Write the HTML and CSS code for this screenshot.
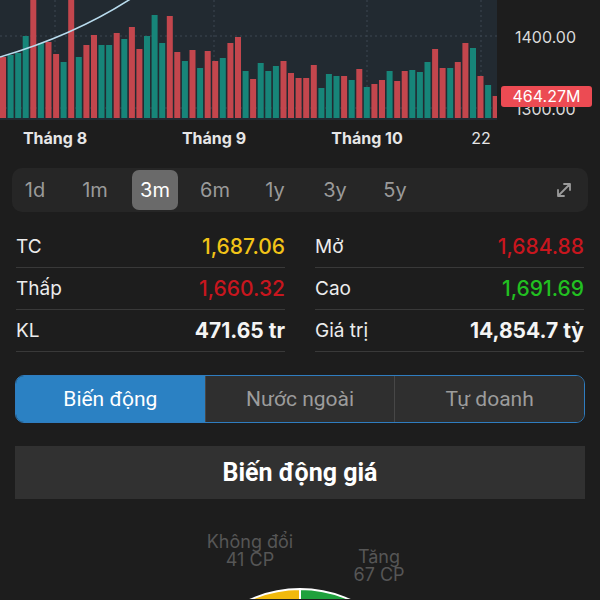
FILE: index.html
```html
<!DOCTYPE html>
<html lang="vi">
<head>
    <meta charset="UTF-8">
    <meta name="viewport" content="width=device-width, initial-scale=1.0">
    <title>VNINDEX</title>
    <link rel="stylesheet" href="styles.css">
</head>
<body>
    <div class="chart">
        <div class="plot">
            <svg width="497" height="120" viewBox="0 0 497 120">
                <g class="grid">
                    <line x1="55" y1="0" x2="55" y2="118"/>
                    <line x1="214" y1="0" x2="214" y2="118"/>
                    <line x1="367" y1="0" x2="367" y2="118"/>
                    <line x1="481" y1="0" x2="481" y2="118"/>
                    <line x1="0" y1="36" x2="497" y2="36"/>
                    <line x1="0" y1="108" x2="497" y2="108"/>
                </g>
                <g class="bars">
                    <rect class="dn" x="0" y="57" width="6" height="61"/>
                    <rect class="up" x="7.6" y="55" width="6" height="63"/>
                    <rect class="up" x="15.2" y="53" width="6" height="65"/>
                    <rect class="up" x="22.7" y="36" width="6" height="82"/>
                    <rect class="dn" x="30.3" y="0" width="6" height="118"/>
                    <rect class="up" x="37.9" y="43" width="6" height="75"/>
                    <rect class="dn" x="45.5" y="42" width="6" height="76"/>
                    <rect class="dn" x="53.1" y="54" width="6" height="64"/>
                    <rect class="up" x="60.6" y="62" width="6" height="56"/>
                    <rect class="dn" x="68.2" y="0" width="6" height="118"/>
                    <rect class="up" x="75.8" y="57" width="6" height="61"/>
                    <rect class="dn" x="83.4" y="45" width="6" height="73"/>
                    <rect class="dn" x="91" y="35" width="6" height="83"/>
                    <rect class="up" x="98.5" y="45" width="6" height="73"/>
                    <rect class="up" x="106.1" y="45" width="6" height="73"/>
                    <rect class="dn" x="113.7" y="33" width="6" height="85"/>
                    <rect class="up" x="121.3" y="39" width="6" height="79"/>
                    <rect class="dn" x="128.9" y="27" width="6" height="91"/>
                    <rect class="dn" x="136.4" y="49" width="6" height="69"/>
                    <rect class="up" x="144" y="36" width="6" height="82"/>
                    <rect class="up" x="151.6" y="15" width="6" height="103"/>
                    <rect class="up" x="159.2" y="43" width="6" height="75"/>
                    <rect class="dn" x="166.8" y="16" width="6" height="102"/>
                    <rect class="dn" x="174.3" y="52" width="6" height="66"/>
                    <rect class="up" x="181.9" y="61" width="6" height="57"/>
                    <rect class="dn" x="189.5" y="50" width="6" height="68"/>
                    <rect class="up" x="197.1" y="68" width="6" height="50"/>
                    <rect class="dn" x="204.7" y="51" width="6" height="67"/>
                    <rect class="dn" x="212.2" y="61" width="6" height="57"/>
                    <rect class="up" x="219.8" y="58" width="6" height="60"/>
                    <rect class="dn" x="227.4" y="43" width="6" height="75"/>
                    <rect class="dn" x="235" y="37" width="6" height="81"/>
                    <rect class="up" x="242.6" y="71" width="6" height="47"/>
                    <rect class="dn" x="250.1" y="79" width="6" height="39"/>
                    <rect class="up" x="257.7" y="63" width="6" height="55"/>
                    <rect class="up" x="265.3" y="71" width="6" height="47"/>
                    <rect class="up" x="272.9" y="66" width="6" height="52"/>
                    <rect class="dn" x="280.5" y="61" width="6" height="57"/>
                    <rect class="dn" x="288" y="73" width="6" height="45"/>
                    <rect class="dn" x="295.6" y="78" width="6" height="40"/>
                    <rect class="dn" x="303.2" y="78" width="6" height="40"/>
                    <rect class="dn" x="310.8" y="65" width="6" height="53"/>
                    <rect class="up" x="318.4" y="88" width="6" height="30"/>
                    <rect class="up" x="325.9" y="74" width="6" height="44"/>
                    <rect class="up" x="333.5" y="76" width="6" height="42"/>
                    <rect class="dn" x="341.1" y="76" width="6" height="42"/>
                    <rect class="up" x="348.7" y="80" width="6" height="38"/>
                    <rect class="dn" x="356.3" y="69" width="6" height="49"/>
                    <rect class="up" x="363.8" y="87" width="6" height="31"/>
                    <rect class="dn" x="371.4" y="84" width="6" height="34"/>
                    <rect class="dn" x="379" y="80" width="6" height="38"/>
                    <rect class="up" x="386.6" y="71" width="6" height="47"/>
                    <rect class="dn" x="394.2" y="81" width="6" height="37"/>
                    <rect class="dn" x="401.7" y="71" width="6" height="47"/>
                    <rect class="up" x="409.3" y="70" width="6" height="48"/>
                    <rect class="up" x="416.9" y="72" width="6" height="46"/>
                    <rect class="up" x="424.5" y="62" width="6" height="56"/>
                    <rect class="dn" x="432.1" y="49" width="6" height="69"/>
                    <rect class="dn" x="439.6" y="68" width="6" height="50"/>
                    <rect class="up" x="447.2" y="68" width="6" height="50"/>
                    <rect class="dn" x="454.8" y="62" width="6" height="56"/>
                    <rect class="dn" x="462.4" y="43" width="6" height="75"/>
                    <rect class="up" x="470" y="48" width="6" height="70"/>
                    <rect class="dn" x="477.5" y="76" width="6" height="42"/>
                    <rect class="up" x="485.1" y="85" width="6" height="33"/>
                    <rect class="dn" x="492.7" y="96" width="6" height="22"/>
                </g>
                <path class="trend" d="M0 57 Q 75 35 132 -2"/>
            </svg>
        </div>
        <div class="axis">
            <span class="price price-top">1400.00</span>
            <span class="price price-low">1300.00</span>
            <span class="vol-tag">464.27M</span>
        </div>
    </div>

    <div class="months">
        <span class="month m8">Tháng 8</span>
        <span class="month m9">Tháng 9</span>
        <span class="month m10">Tháng 10</span>
        <span class="month day">22</span>
    </div>

    <div class="periods">
        <span class="period">1d</span>
        <span class="period">1m</span>
        <span class="period active">3m</span>
        <span class="period">6m</span>
        <span class="period">1y</span>
        <span class="period">3y</span>
        <span class="period">5y</span>
        <svg class="expand" width="20" height="20" viewBox="0 0 20 20">
            <path d="M4 16 L16 4 M10 4 H16 V10 M4 10 V16 H10"/>
        </svg>
    </div>

    <div class="stats">
        <div class="stat"><span>TC</span><span class="val ref">1,687.06</span></div>
        <div class="stat"><span>Mở</span><span class="val down">1,684.88</span></div>
        <div class="stat"><span>Thấp</span><span class="val down">1,660.32</span></div>
        <div class="stat"><span>Cao</span><span class="val up">1,691.69</span></div>
        <div class="stat"><span>KL</span><span class="val strong">471.65 tr</span></div>
        <div class="stat"><span>Giá trị</span><span class="val strong">14,854.7 tỷ</span></div>
    </div>

    <div class="segments">
        <div class="seg active">Biến động</div>
        <div class="seg">Nước ngoài</div>
        <div class="seg">Tự doanh</div>
    </div>

    <div class="section-title">Biến động giá</div>

    <div class="breakdown">
        <svg class="pie" width="600" height="100" viewBox="0 0 600 100">
            <path class="slice-flat" d="M300 212 V90 A122 122 0 0 0 300 334 Z"/>
            <path class="slice-up" d="M300 212 V90 A122 122 0 0 1 300 334 Z"/>
        </svg>
        <div class="pie-label flat"><span>Không đổi</span><span>41 CP</span></div>
        <div class="pie-label rise"><span>Tăng</span><span>67 CP</span></div>
    </div>
</body>
</html>
```

FILE: styles.css
```css
body{
    margin: 0;
    width: 600px;
    height: 600px;
    overflow: hidden;
    background: #1d1d1d;
    color: #ececec;
    font-family: Inter, "Liberation Sans", sans-serif;
}

/* chart */
.chart{
    display: flex;
    height: 120px;
}
.plot{
    width: 497px;
    background: #222a31;
}
.plot svg{
    display: block;
}
.grid line{
    stroke: #3c4752;
    stroke-width: 1;
    stroke-dasharray: 2 3;
}
.bars .up{
    fill: #178579;
}
.bars .dn{
    fill: #c3464d;
}
.trend{
    fill: none;
    stroke: #b9dcee;
    stroke-width: 1.6;
}
.axis{
    flex: 1;
    position: relative;
}
.price{
    position: absolute;
    left: 18px;
    font-size: 16px;
    line-height: 20px;
    color: #dadada;
}
.price-top{
    top: 27px;
}
.price-low{
    top: 99px;
}
.vol-tag{
    position: absolute;
    left: 4px;
    top: 86px;
    width: 91px;
    height: 21px;
    line-height: 21px;
    border-radius: 3px;
    background: #ec4b53;
    color: #fff;
    font-size: 16px;
    text-align: center;
}

/* month axis */
.months{
    position: relative;
    height: 36px;
}
.month{
    position: absolute;
    top: 8px;
    transform: translateX(-50%);
    font-size: 16px;
    font-weight: 700;
    color: #e6e6e6;
    white-space: nowrap;
}
.m8{ left: 55px; }
.m9{ left: 214px; }
.m10{ left: 367px; }
.day{
    left: 481px;
    font-weight: 400;
}

/* period selector */
.periods{
    margin: 12px 12px 0;
    height: 44px;
    display: flex;
    align-items: center;
    gap: 14px;
    background: #262626;
    border-radius: 10px;
}
.period{
    width: 46px;
    height: 40px;
    line-height: 40px;
    text-align: center;
    font-size: 20px;
    color: #9a9a9a;
    border-radius: 7px;
}
.period.active{
    background: #6a6a6a;
    color: #fff;
}
.expand{
    margin-left: auto;
    margin-right: 14px;
}
.expand path{
    fill: none;
    stroke: #9a9a9a;
    stroke-width: 1.8;
    stroke-linecap: round;
    stroke-linejoin: round;
}

/* stats */
.stats{
    margin-top: 14px;
    padding: 0 16px;
    display: grid;
    grid-template-columns: 1fr 1fr;
    column-gap: 30px;
}
.stat{
    height: 41px;
    display: flex;
    align-items: center;
    justify-content: space-between;
    border-bottom: 1px solid #393939;
    font-size: 19px;
}
.val{
    font-size: 21px;
    font-weight: 500;
}
.val.ref{ color: #f2c418; }
.val.down{ color: #c8161e; }
.val.up{ color: #22c021; }
.val.strong{
    font-weight: 700;
    color: #f4f4f4;
}

/* segmented tabs */
.segments{
    margin: 23px 15px 0;
    height: 46px;
    display: flex;
    border: 1.5px solid #2f7dc0;
    border-radius: 9px;
    overflow: hidden;
}
.seg{
    flex: 1;
    display: flex;
    align-items: center;
    justify-content: center;
    font-family: Roboto, sans-serif;
    font-size: 21px;
    color: #9c9c9c;
    background: #2f2f2f;
    border-left: 1px solid #474747;
}
.seg.active{
    background: #2b81c3;
    color: #fff;
    border-left: none;
}

.section-title{
    margin: 23px 15px 0;
    height: 53px;
    display: flex;
    align-items: center;
    justify-content: center;
    background: #313131;
    font-family: Roboto, sans-serif;
    font-size: 25px;
    font-weight: 700;
    color: #fff;
}

/* pie breakdown */
.breakdown{
    position: relative;
    height: 100px;
}
.pie{
    position: absolute;
    left: 0;
    top: 0;
}
.slice-flat{
    fill: #f1b90c;
    stroke: #fff;
    stroke-width: 2;
}
.slice-up{
    fill: #1fa13c;
    stroke: #fff;
    stroke-width: 2;
}
.pie-label{
    position: absolute;
    width: 120px;
    display: flex;
    flex-direction: column;
    align-items: center;
    font-size: 18px;
    line-height: 18px;
    color: #565656;
}
.pie-label.flat{
    left: 190px;
    top: 34px;
}
.pie-label.rise{
    left: 319px;
    top: 49px;
}
```
